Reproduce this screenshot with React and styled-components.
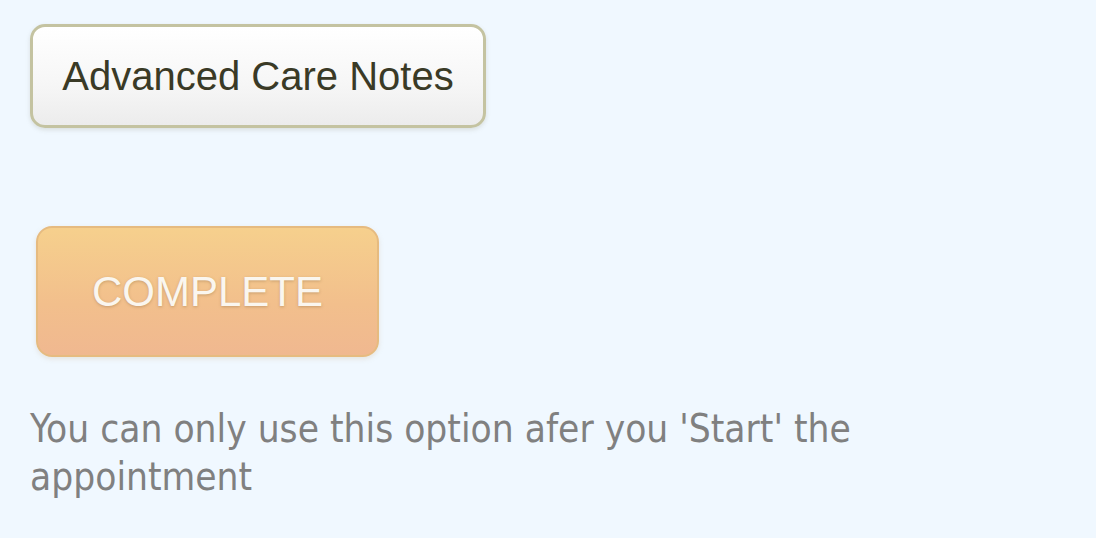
import React from 'react';
import styled, { createGlobalStyle } from 'styled-components';

const GlobalStyle = createGlobalStyle`
  html, body {
    margin: 0;
    padding: 0;
    background: #f0f8ff;
  }
`;

const Page = styled.div`
  display: flex;
  flex-direction: column;
  align-items: flex-start;
  padding: 24px 30px 0 30px;
  min-height: 538px;
  box-sizing: border-box;
`;

const NotesButton = styled.button`
  width: 456px;
  height: 104px;
  box-sizing: border-box;
  border: 3px solid #c4c3a1;
  border-radius: 15px;
  background: linear-gradient(to bottom, #ffffff 0%, #f6f6f6 60%, #ececec 100%);
  box-shadow: 0 2px 4px rgba(150, 150, 130, 0.25);
  color: #3a3a26;
  font-family: "Liberation Sans", Arial, sans-serif;
  font-size: 40px;
  padding: 0;
`;

const CompleteButton = styled.button`
  margin-top: 98px;
  margin-left: 6px;
  width: 343px;
  height: 131px;
  box-sizing: border-box;
  border: 2px solid #e6bb80;
  border-radius: 16px;
  background: linear-gradient(to bottom, #f6d08d 0%, #f2bf8c 60%, #f0b890 100%);
  box-shadow: 0 2px 5px rgba(200, 170, 130, 0.25);
  color: #faf6ef;
  font-family: "Liberation Sans", Arial, sans-serif;
  font-size: 42px;
  text-shadow: 0 1px 3px rgba(120, 90, 50, 0.35);
  padding: 0;
`;

const Hint = styled.p`
  margin: 48px 0 0 0;
  width: 880px;
  color: #808080;
  font-family: "DejaVu Sans Condensed", "DejaVu Sans", sans-serif;
  font-size: 38.5px;
  line-height: 48px;
`;

export default function App() {
  return (
    <>
      <GlobalStyle />
      <Page>
        <NotesButton>Advanced Care Notes</NotesButton>
        <CompleteButton>COMPLETE</CompleteButton>
        <Hint>You can only use this option afer you 'Start' the<br />appointment</Hint>
      </Page>
    </>
  );
}
